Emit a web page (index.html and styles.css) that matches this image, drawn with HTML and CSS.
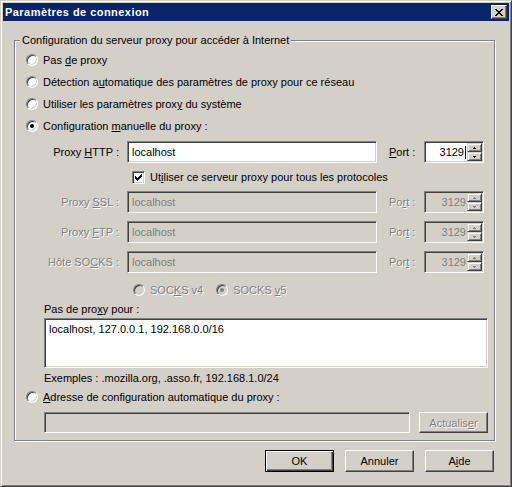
FILE: index.html
```html
<!DOCTYPE html>
<html lang="fr">
<head>
    <meta charset="UTF-8">
    <title>Paramètres de connexion</title>
    <link rel="stylesheet" href="styles.css">
</head>
<body>
    <div class="window">
        <div class="titlebar">
            <span class="title">Paramètres de connexion</span>
            <div class="close">
                <svg width="8" height="7" viewBox="0 0 8 7"><path d="M0 0h2v1H0z M6 0h2v1H6z M1 1h2v1H1z M5 1h2v1H5z M2 2h4v1H2z M3 3h2v1H3z M2 4h4v1H2z M1 5h2v1H1z M5 5h2v1H5z M0 6h2v1H0z M6 6h2v1H6z" fill="#000"/></svg>
            </div>
        </div>

        <fieldset class="group">
            <legend>Configuration du serveur proxy pour accéder à Internet</legend>

            <div class="opt"><span class="radio"></span><span>Pas <u>d</u>e proxy</span></div>
            <div class="opt"><span class="radio"></span><span>Détection a<u>u</u>tomatique des paramètres de proxy pour ce réseau</span></div>
            <div class="opt"><span class="radio"></span><span>Utiliser les paramètres prox<u>y</u> du système</span></div>
            <div class="opt"><span class="radio on"></span><span>Configuration <u>m</u>anuelle du proxy :</span></div>

            <div class="proxy-grid">
                <span class="lbl">Proxy <u>H</u>TTP :</span>
                <div class="field">localhost</div>
                <span class="plbl"><u>P</u>ort :</span>
                <div class="field spin">
                    <span class="spin-val">3129<span class="caret"></span></span>
                    <div class="spin-btns">
                        <div class="sbtn"><svg width="3" height="2" viewBox="0 0 3 2"><path d="M1 0h1v1H1z M0 1h3v1H0z"/></svg></div>
                        <div class="sbtn"><svg width="3" height="2" viewBox="0 0 3 2"><path d="M0 0h3v1H0z M1 1h1v1H1z"/></svg></div>
                    </div>
                </div>

                <div class="check-row">
                    <span class="checkbox">
                        <svg width="7" height="7" viewBox="0 0 7 7"><path d="M6 0h1v1H6z M5 1h2v1H5z M0 2h1v1H0z M4 2h3v1H4z M0 3h2v1H0z M3 3h3v1H3z M0 4h5v1H0z M1 5h3v1H1z M2 6h1v1H2z" fill="#000"/></svg>
                    </span>
                    <span>Ut<u>i</u>liser ce serveur proxy pour tous les protocoles</span>
                </div>

                <span class="lbl dis">Proxy <u>S</u>SL :</span>
                <div class="field off">localhost</div>
                <span class="plbl dis">Po<u>r</u>t :</span>
                <div class="field spin off">
                    <span class="spin-val">3129</span>
                    <div class="spin-btns">
                        <div class="sbtn"><svg width="3" height="2" viewBox="0 0 3 2"><path d="M1 0h1v1H1z M0 1h3v1H0z"/></svg></div>
                        <div class="sbtn"><svg width="3" height="2" viewBox="0 0 3 2"><path d="M0 0h3v1H0z M1 1h1v1H1z"/></svg></div>
                    </div>
                </div>

                <span class="lbl dis">Proxy <u>F</u>TP :</span>
                <div class="field off">localhost</div>
                <span class="plbl dis">Por<u>t</u> :</span>
                <div class="field spin off">
                    <span class="spin-val">3129</span>
                    <div class="spin-btns">
                        <div class="sbtn"><svg width="3" height="2" viewBox="0 0 3 2"><path d="M1 0h1v1H1z M0 1h3v1H0z"/></svg></div>
                        <div class="sbtn"><svg width="3" height="2" viewBox="0 0 3 2"><path d="M0 0h3v1H0z M1 1h1v1H1z"/></svg></div>
                    </div>
                </div>

                <span class="lbl dis">Hôte SO<u>C</u>KS :</span>
                <div class="field off">localhost</div>
                <span class="plbl dis">Por<u>t</u> :</span>
                <div class="field spin off">
                    <span class="spin-val">3129</span>
                    <div class="spin-btns">
                        <div class="sbtn"><svg width="3" height="2" viewBox="0 0 3 2"><path d="M1 0h1v1H1z M0 1h3v1H0z"/></svg></div>
                        <div class="sbtn"><svg width="3" height="2" viewBox="0 0 3 2"><path d="M0 0h3v1H0z M1 1h1v1H1z"/></svg></div>
                    </div>
                </div>
            </div>

            <div class="socks">
                <span class="radio off"></span><span class="dis socks-v4">SOC<u>K</u>S v4</span>
                <span class="radio off on"></span><span class="dis">SOCKS <u>v</u>5</span>
            </div>

            <div class="indent">
                <div class="line">Pas de pro<u>x</u>y pour :</div>
                <div class="field area">localhost, 127.0.0.1, 192.168.0.0/16</div>
                <div class="line examples">Exemples : .mozilla.org, .asso.fr, 192.168.1.0/24</div>
            </div>

            <div class="opt auto"><span class="radio"></span><span><u>A</u>dresse de configuration automatique du proxy :</span></div>

            <div class="url-row">
                <div class="field off url"></div>
                <div class="btn dis refresh">Actualis<u>e</u>r</div>
            </div>
        </fieldset>

        <div class="buttons">
            <div class="btn default">OK</div>
            <div class="btn">Annuler</div>
            <div class="btn">A<u>i</u>de</div>
        </div>
    </div>
</body>
</html>
```

FILE: styles.css
```css
body {
    margin: 0;
    font-family: "Liberation Sans", Arial, sans-serif;
    font-size: 11px;
    color: #000;
    background-color: #d4d0c8;
}
u {
    text-decoration: underline;
    text-underline-offset: 1px;
}
.window {
    width: 512px;
    height: 487px;
    box-sizing: border-box;
    padding: 2px;
    background-color: #d4d0c8;
    border: 1px solid;
    border-color: #d4d0c8 #404040 #404040 #d4d0c8;
    box-shadow: inset 1px 1px #fff, inset -1px -1px #808080;
}
.titlebar {
    display: flex;
    align-items: center;
    justify-content: space-between;
    height: 18px;
    padding: 0 2px;
    background-color: #0a246a;
}
.title {
    color: #fff;
    font-weight: bold;
    letter-spacing: 0.45px;
}
.close {
    display: flex;
    align-items: center;
    justify-content: center;
    width: 16px;
    height: 14px;
    box-sizing: border-box;
    background-color: #d4d0c8;
    border: 1px solid;
    border-color: #fff #404040 #404040 #fff;
    box-shadow: inset -1px -1px #808080;
}
.close svg {
    margin-left: -1px;
}

/* group box */
.group {
    margin: 12px 14px 0 11px;
    padding: 2px 0 7px 11px;
    border: 1px solid #808080;
    box-shadow: inset 1px 1px #fff, 1px 1px #fff;
    min-width: 0;
}
.group legend {
    padding: 0 2px;
    margin-left: -6px;
    line-height: 14px;
    background-color: #d4d0c8;
}
.opt {
    display: flex;
    align-items: center;
    height: 22px;
}
.radio {
    position: relative;
    flex: none;
    width: 12px;
    height: 12px;
    box-sizing: border-box;
    margin-right: 5px;
    border-radius: 50%;
    background-color: #fff;
    border: 1px solid;
    border-color: #808080 #fff #fff #808080;
    box-shadow: inset 1px 1px #404040, inset -1px -1px #d4d0c8;
}
.radio.on::after {
    content: "";
    position: absolute;
    left: 3px;
    top: 3px;
    width: 4px;
    height: 4px;
    border-radius: 50%;
    background-color: #000;
}
.radio.off {
    background-color: #d4d0c8;
}
.radio.off.on::after {
    background-color: #808080;
}

/* edit fields */
.field {
    display: flex;
    align-items: center;
    height: 22px;
    box-sizing: border-box;
    padding: 0 4px;
    background-color: #fff;
    border: 1px solid;
    border-color: #808080 #fff #fff #808080;
    box-shadow: inset 1px 1px #404040, inset -1px -1px #d4d0c8;
    white-space: nowrap;
}
.field.off {
    background-color: #d4d0c8;
    color: #808080;
}
.dis {
    color: #808080;
    text-shadow: 1px 1px 0 #fff;
}

.proxy-grid {
    display: grid;
    grid-template-columns: 93px 250px 31px 60px;
    grid-template-rows: 22px 12px 22px 22px 22px;
    column-gap: 8px;
    row-gap: 8px;
    align-items: center;
    margin-top: 4px;
}
.lbl {
    text-align: right;
    white-space: nowrap;
}
.plbl {
    padding-left: 4px;
    white-space: nowrap;
}
.spin {
    padding: 1px;
    align-items: stretch;
}
.spin-val {
    flex: 1;
    display: flex;
    align-items: center;
    justify-content: flex-end;
    padding-right: 1px;
}
.caret {
    width: 1px;
    height: 13px;
    margin-left: 1px;
    background-color: #000;
}
.spin-btns {
    display: flex;
    flex-direction: column;
    width: 15px;
}
.sbtn {
    display: flex;
    align-items: center;
    justify-content: center;
    height: 9px;
    box-sizing: border-box;
    background-color: #d4d0c8;
    border: 1px solid;
    border-color: #d4d0c8 #404040 #404040 #d4d0c8;
    box-shadow: inset 1px 1px #fff, inset -1px -1px #808080;
}
.sbtn svg {
    fill: #000;
}
.off .sbtn svg {
    fill: #808080;
}
.check-row {
    grid-column: 2 / 5;
    display: flex;
    align-items: center;
    white-space: nowrap;
}
.checkbox {
    display: flex;
    align-items: center;
    justify-content: center;
    width: 13px;
    height: 13px;
    box-sizing: border-box;
    margin: 0 5px;
    background-color: #fff;
    border: 1px solid;
    border-color: #808080 #fff #fff #808080;
    box-shadow: inset 1px 1px #404040, inset -1px -1px #d4d0c8;
}

.socks {
    display: flex;
    align-items: center;
    height: 20px;
    margin: 7px 0 0 107px;
}
.socks-v4 {
    margin-right: 13px;
}
.indent {
    margin-left: 18px;
}
.line {
    height: 14px;
    line-height: 14px;
    margin-top: 2px;
    white-space: nowrap;
}
.area {
    display: block;
    width: 444px;
    height: 50px;
    margin-top: 2px;
    padding: 3px 4px;
    line-height: 14px;
}
.examples {
    margin-top: 3px;
}
.auto {
    height: 20px;
    margin-top: 2px;
}
.url-row {
    display: flex;
    height: 21px;
    margin: 5px 0 0 18px;
}
.url {
    width: 366px;
    height: 21px;
}

/* push buttons */
.btn {
    display: flex;
    align-items: center;
    justify-content: center;
    width: 69px;
    height: 22px;
    box-sizing: border-box;
    background-color: #d4d0c8;
    border: 1px solid;
    border-color: #fff #404040 #404040 #fff;
    box-shadow: inset -1px -1px #808080;
}
.btn.default {
    border-color: #000;
    box-shadow: inset 1px 1px #fff, inset -1px -1px #404040, inset -2px -2px #808080;
}
.refresh {
    height: 21px;
    margin-left: 9px;
}
.buttons {
    display: flex;
    justify-content: flex-end;
    gap: 11px;
    margin: 9px 15px 0 0;
}
```
